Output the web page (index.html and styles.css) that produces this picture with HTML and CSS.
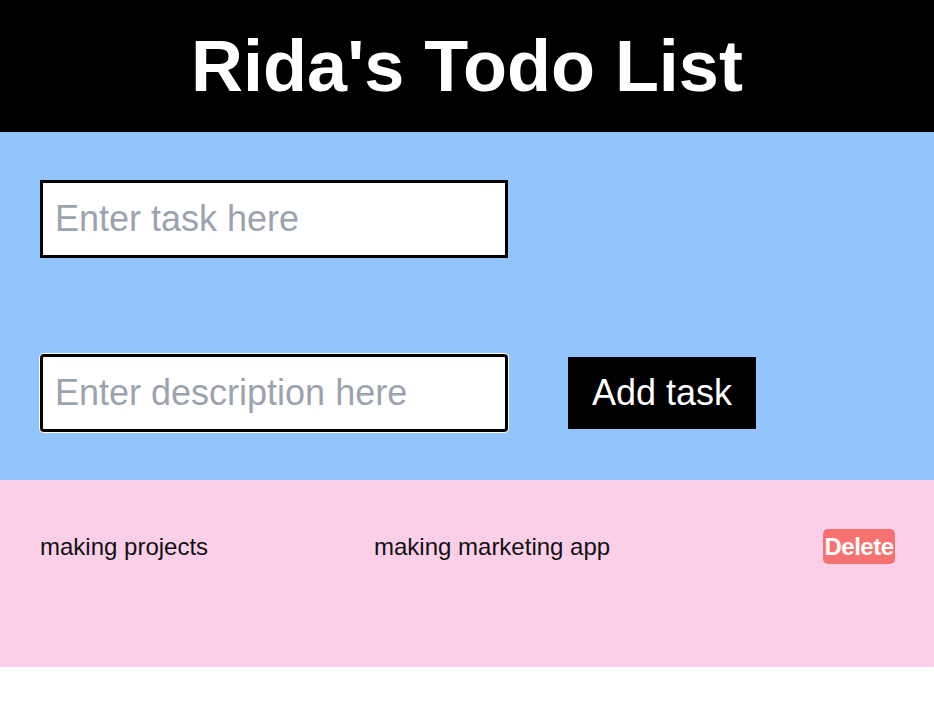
FILE: index.html
```html
<!DOCTYPE html>
<html lang="en">
<head>
<meta charset="utf-8">
<title>Rida's Todo List</title>
<link rel="stylesheet" href="styles.css">
</head>
<body>
  <header class="header">
    <h1 class="title">Rida's Todo List</h1>
  </header>
  <section class="form">
    <div class="form-row">
      <input class="field" type="text" placeholder="Enter task here">
    </div>
    <div class="form-row">
      <input class="field field-focus" type="text" placeholder="Enter description here">
      <button class="add-btn">Add task</button>
    </div>
  </section>
  <section class="tasks">
    <div class="task">
      <span class="task-title">making projects</span>
      <span class="task-desc">making marketing app</span>
      <button class="delete-btn">Delete</button>
    </div>
  </section>
</body>
</html>
```
FILE: styles.css
```css
* { box-sizing: border-box; }
html, body { margin: 0; padding: 0; background: #ffffff; }
body { font-family: "Liberation Sans", Arial, sans-serif; }

.header {
  background: #000000;
  padding: 30px 0;
  text-align: center;
}
.title {
  margin: 0;
  color: #ffffff;
  font-size: 72px;
  line-height: 72px;
  font-weight: 700;
}

.form {
  background: #93c5fd;
  padding: 48px 40px;
  display: flex;
  flex-direction: column;
  gap: 96px;
}
.form-row {
  display: flex;
  align-items: center;
  gap: 60px;
}
.field {
  width: 468px;
  height: 78px;
  border: 3px solid #000000;
  border-radius: 0;
  padding: 16px 12px;
  font-family: "Liberation Sans", Arial, sans-serif;
  font-size: 36px;
  line-height: 40px;
  color: #000000;
  background: #ffffff;
  outline: none;
}
.field::placeholder { color: #9ca3af; opacity: 1; }
.field-focus {
  border-radius: 4px;
  box-shadow: 0 0 0 1px #ffffff;
}
.add-btn {
  background: #000000;
  color: #ffffff;
  border: none;
  padding: 16px 24px;
  font-family: "Liberation Sans", Arial, sans-serif;
  font-size: 36px;
  line-height: 40px;
  cursor: pointer;
}

.tasks {
  background: #fbcfe8;
  padding: 49px 39px 103px 40px;
}
.task {
  display: flex;
  align-items: center;
}
.task-title {
  width: 334px;
  font-size: 24px;
  line-height: 32px;
  color: #111111;
}
.task-desc {
  flex: 1;
  font-size: 24px;
  line-height: 32px;
  color: #111111;
}
.delete-btn {
  background: #f87171;
  color: #ffffff;
  border: none;
  border-radius: 5px;
  padding: 2px 0 1px;
  width: 72px;
  font-family: "Liberation Sans", Arial, sans-serif;
  font-size: 24px;
  line-height: 32px;
  font-weight: 700;
  letter-spacing: -0.5px;
  cursor: pointer;
}
```
